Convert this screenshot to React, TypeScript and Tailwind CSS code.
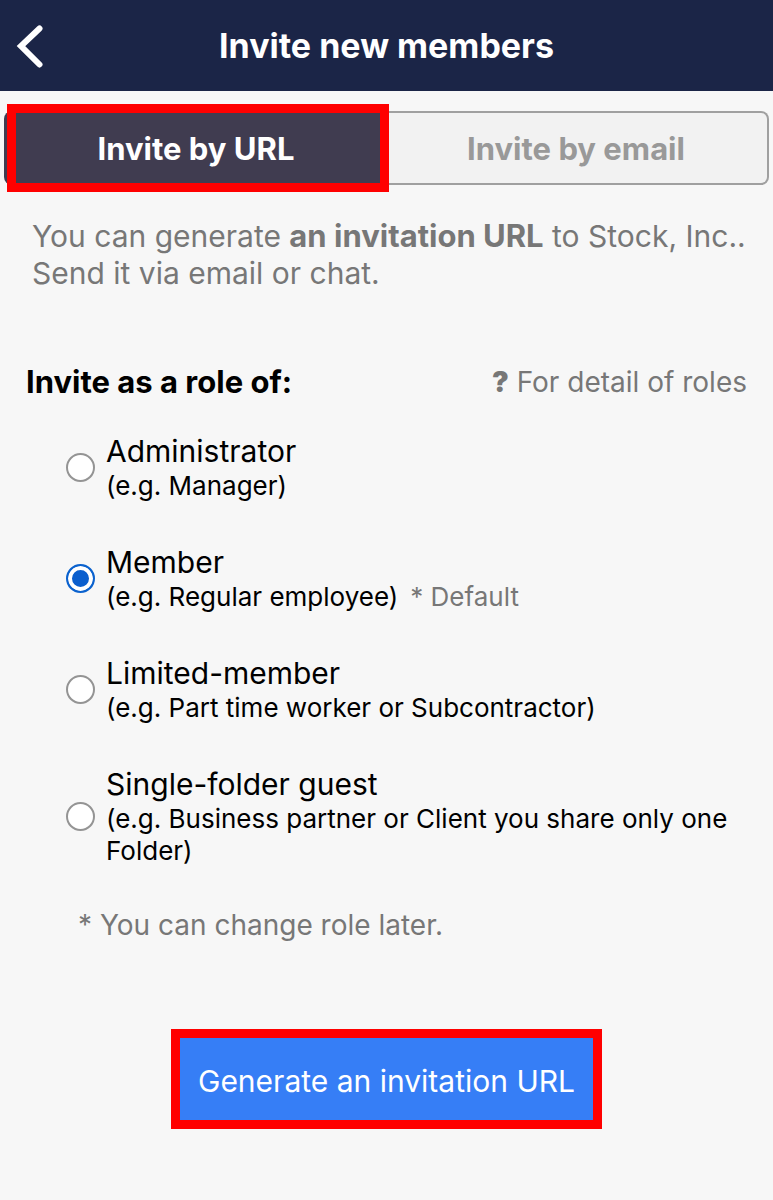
import React, { useState } from "react";

const roles = [
  { id: "admin", name: "Administrator", example: "(e.g. Manager)" },
  { id: "member", name: "Member", example: "(e.g. Regular employee)", note: "* Default" },
  { id: "limited", name: "Limited-member", example: "(e.g. Part time worker or Subcontractor)" },
  { id: "guest", name: "Single-folder guest", example: "(e.g. Business partner or Client you share only one Folder)" },
];

export default function App() {
  const [role, setRole] = useState("member");
  return (
    <div className="min-h-screen bg-[#f7f7f7] font-['Inter','Liberation_Sans',sans-serif] text-black">
      <header className="grid h-[91px] grid-cols-[60px_1fr_60px] items-center bg-[#1b2547] text-white">
        <button type="button" aria-label="Back" className="flex h-full items-center pl-4">
          <svg viewBox="0 0 28 44" className="h-11 w-7" fill="none" stroke="currentColor" strokeWidth="6" strokeLinecap="round">
            <path d="M23.500 4.500 5 22l18.500 18.500" strokeLinejoin="miter" />
          </svg>
        </button>
        <h1 className="text-center text-[34px] font-bold">Invite new members</h1>
      </header>
      <main>
        <div className="grid grid-cols-[385fr_380fr] items-center px-1 pt-5">
          <div className="flex h-[74px] items-center rounded-l-lg bg-[#403c50] pl-[3px]">
            <button type="button" className="h-[88px] w-full shrink-0 border-[9px] border-[#ff0000] bg-[#403c50] pt-0.5 pr-1 text-[31px] font-bold text-white">
              Invite by URL
            </button>
          </div>
          <button type="button" className="h-[74px] rounded-r-lg border-2 border-l-0 border-[#a0a0a0] bg-[#f2f2f2] pt-0.5 pr-1 text-[31px] font-bold text-[#999]">
            Invite by email
          </button>
        </div>
        <p className="mt-8 pl-8 text-[30px] leading-[37px] text-[#777]">
          You can generate <strong className="text-[31px] font-bold">an invitation URL</strong> to Stock, Inc..
          <br />
          Send it via email or chat.
        </p>
        <div className="mt-[70px] flex items-center justify-between px-[26px]">
          <h2 id="role-title" className="text-[31px] leading-[40px] font-bold">Invite as a role of:</h2>
          <a href="#roles" className="text-[28px] leading-[40px] text-[#777]">
            <span className="font-black">?</span> For detail of roles
          </a>
        </div>
        <div role="radiogroup" aria-labelledby="role-title" className="mt-[30px] flex flex-col gap-[41px] pr-8 pl-[66px]">
          {roles.map((r) => (
            <label key={r.id} className="flex items-center gap-[11px]">
              <input
                type="radio"
                name="role"
                checked={role === r.id}
                onChange={() => setRole(r.id)}
                className="size-[29px] shrink-0 appearance-none rounded-full border-2 border-[#949494] bg-white checked:border-[#0b62ce] checked:bg-[#0b5fce] checked:shadow-[inset_0_0_0_4px_white]"
              />
              <span>
                <span className="block text-[30px] leading-[38px]">{r.name}</span>
                <span className="block text-[26px] leading-[32px]">
                  {r.example}
                  {r.note && <span className="ml-3 text-[#777]">{r.note}</span>}
                </span>
              </span>
            </label>
          ))}
        </div>
        <p className="mt-10 pl-[78px] text-[28px] leading-[36px] text-[#777]">* You can change role later.</p>
        <div className="mt-[86px] flex justify-center">
          <button type="button" className="h-[100px] border-[9px] border-[#ff0000] bg-[#367ef6] px-[18px] pt-1 text-[30px] text-white">
            Generate an invitation URL
          </button>
        </div>
      </main>
    </div>
  );
}
